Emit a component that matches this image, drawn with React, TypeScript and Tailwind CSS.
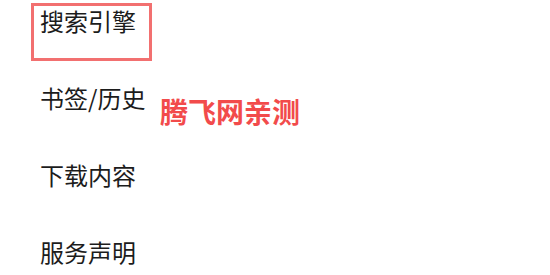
import React from "react";

const items = ["搜索引擎", "书签/历史", "下载内容", "服务声明"];

export default function App() {
  return (
    <div
      className="relative w-[550px] h-[275px] overflow-hidden bg-white text-[#1c1c1c]"
      style={{ fontFamily: '"Noto Sans CJK SC", "Noto Sans", sans-serif' }}
    >
      <ul className="flex flex-col gap-[45px] pt-[5px] pl-[40px]">
        {items.map((label, i) => (
          <li key={label} className="relative text-[24px] leading-[32px]">
            {i === 0 && (
              <span className="absolute left-[-9px] top-[-2px] w-[121px] h-[58px] border-[3px] border-[#f27070]" />
            )}
            {label}
          </li>
        ))}
      </ul>
      <div className="absolute left-[160px] top-[94px] text-[28px] leading-[34px] font-bold text-[#f24b4b]">
        腾飞网亲测
      </div>
    </div>
  );
}
